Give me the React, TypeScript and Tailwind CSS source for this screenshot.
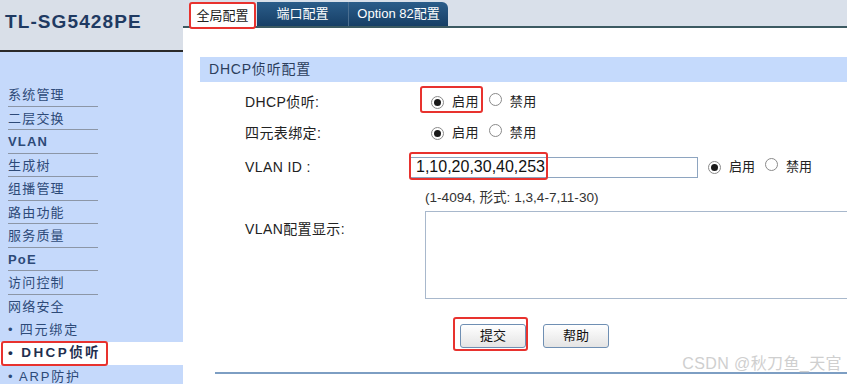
import React from 'react';

const font = { fontFamily: '"Liberation Sans", "Noto Sans CJK SC", sans-serif' };

const menu = [
  { label: '系统管理', line: true },
  { label: '二层交换', line: true },
  { label: 'VLAN', line: true, bold: true },
  { label: '生成树', line: true },
  { label: '组播管理', line: true },
  { label: '路由功能', line: true },
  { label: '服务质量', line: true },
  { label: 'PoE', line: true, bold: true },
  { label: '访问控制', line: true },
  { label: '网络安全', line: false },
  { label: '• 四元绑定', line: false, sub: true },
  { label: '• DHCP侦听', line: false, active: true },
  { label: '• ARP防护', line: false, sub: true },
];

const Radio: React.FC<{ checked?: boolean }> = ({ checked }) => (
  <span className="inline-flex w-[13px] h-[13px] rounded-full border border-[#8a8a8a] bg-white items-center justify-center shrink-0">
    {checked && <span className="w-[7px] h-[7px] rounded-full bg-[#1a1a1a]" />}
  </span>
);

const RadioPair: React.FC<{ mark?: boolean }> = ({ mark }) => (
  <div className="relative flex items-center text-[13px] text-[#222]">
    {mark && <div className="absolute left-[-11px] top-[-6px] w-[63px] h-[27px] border-2 border-[#e8322e] rounded-[3px]" />}
    <Radio checked />
    <span className="ml-[8px]">启用</span>
    <span className="ml-[10px]"><Radio /></span>
    <span className="ml-[8px]">禁用</span>
  </div>
);

const Button: React.FC<{ children: React.ReactNode; mark?: boolean }> = ({ children, mark }) => (
  <div className="relative">
    {mark && <div className="absolute left-[-7px] top-[-6px] w-[75px] h-[34px] border-2 border-[#e8322e] rounded-[3px]" />}
    <button className="w-[66px] h-[24px] text-[13px] text-[#111] rounded-[3px] border border-[#6f8fb3] bg-gradient-to-b from-[#ffffff] to-[#e4e4e4]">
      {children}
    </button>
  </div>
);

export default function App() {
  return (
    <div className="w-[854px] h-[384px] overflow-hidden bg-white flex" style={font}>
      {/* Sidebar */}
      <div className="w-[183px] shrink-0 flex flex-col">
        <div className="h-[52px] shrink-0 bg-[#d9dfe8] flex items-center pl-[5px] pb-[6px] border-b-2 border-[#2a2a2a]">
          <span className="text-[19px] font-bold text-[#1f3a62] tracking-[1.1px]">TL-SG5428PE</span>
        </div>
        <div className="flex-1 bg-[#c5d9fb] pt-[31px]">
          {menu.map((m) => (
            <div key={m.label} className={`relative h-[23.5px] ${m.active ? 'bg-white' : ''}`}>
              {m.active && <div className="absolute left-[1px] top-[-1px] w-[107px] h-[25px] border-2 border-[#e8322e] rounded-[3px]" />}
              <div
                className={`h-full flex items-center pl-[8px] ${
                  m.active
                    ? 'text-[13.5px] font-bold tracking-[2.4px] text-[#1f2f4f]'
                    : m.sub
                    ? 'text-[13px] tracking-[1.8px] text-[#2d4a78]'
                    : 'text-[13px] tracking-[1.2px] text-[#2d4a78]'
                } ${m.bold ? 'font-bold' : ''}`}
              >
                {m.label}
              </div>
              {m.line && <div className="absolute left-[8px] bottom-0 w-[90px] h-px bg-[#8c96a6]" />}
            </div>
          ))}
        </div>
      </div>

      {/* Content */}
      <div className="flex-1 flex flex-col pr-[7px]">
        <div className="h-[28px] bg-[#d9e0ea] flex items-end pl-[7px] border-b-2 border-[#3c5a62] shrink-0">
          <div className="relative h-[24px] w-[65px] bg-white flex items-center justify-center text-[13px] text-[#222] mb-[-2px]">
            <div className="absolute left-[-1px] top-[-2px] w-[67px] h-[27px] border-2 border-[#e8322e] rounded-[3px]" />
            全局配置
          </div>
          <div className="h-[24px] w-[92px] ml-[2px] bg-gradient-to-b from-[#2b5d8a] to-[#173f66] flex items-center justify-center text-[13px] text-white border-r border-[#4a6e90]">
            端口配置
          </div>
          <div className="h-[24px] w-[99px] bg-gradient-to-b from-[#2b5d8a] to-[#173f66] rounded-tr-[6px] flex items-center justify-center text-[13px] text-white">
            Option 82配置
          </div>
        </div>

        <div className="pl-[17px] pt-[29px]">
          <div className="h-[25px] bg-[#c5dafc] flex items-center pl-[9px] text-[14px] tracking-[0.8px] text-[#2c3e5c]">DHCP侦听配置</div>

          <div className="pl-[45px]">
            <div className="grid grid-cols-[165px_1fr] text-[14px] tracking-[0.4px] text-[#222]">
              <div className="h-[32px] flex items-center mt-[4px]">DHCP侦听:</div>
              <div className="h-[32px] flex items-center mt-[4px] pl-[21px]"><RadioPair mark /></div>

              <div className="h-[30px] flex items-center">四元表绑定:</div>
              <div className="h-[30px] flex items-center pl-[21px]"><RadioPair /></div>

              <div className="h-[38px] flex items-center">VLAN ID :</div>
              <div className="h-[38px] flex items-center tracking-normal">
                <div className="relative">
                  <div className="absolute left-[-1px] top-[-5px] w-[139px] h-[28px] border-2 border-[#e8322e] rounded-[3px]" />
                  <div className="w-[288px] h-[21px] border border-[#8ea5c0] flex items-center pl-[5px] text-[16px] text-[#111]">
                    1,10,20,30,40,253
                  </div>
                </div>
                <div className="ml-[10px]"><RadioPair /></div>
              </div>

              <div className="h-[25px]" />
              <div className="h-[25px] flex items-center pl-[15px] text-[13.6px] tracking-normal text-[#333]">(1-4094, 形式: 1,3,4-7,11-30)</div>

              <div className="pt-[8px]">VLAN配置显示:</div>
              <div className="pl-[15px]">
                <div className="h-[88px] border border-[#a8b8cc] border-r-0" />
              </div>
            </div>

            <div className="flex gap-[17px] pl-[215px] mt-[24px]">
              <Button mark>提交</Button>
              <Button>帮助</Button>
            </div>
          </div>

          <div className="relative mt-[24px] ml-[15px]">
            <div className="h-[2px] bg-[#7d9ec3]" />
            <div className="absolute right-[5px] top-[-20px] text-[16px] text-[#cfcfcf] tracking-[0.4px]">CSDN @秋刀鱼_天官</div>
          </div>
        </div>
      </div>
    </div>
  );
}
